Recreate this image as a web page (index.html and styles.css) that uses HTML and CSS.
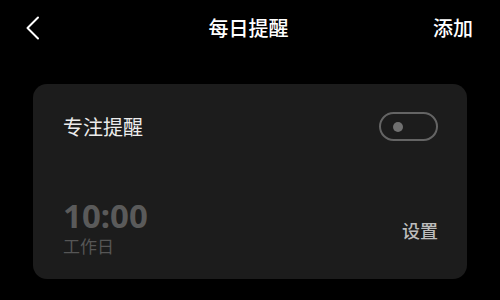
FILE: index.html
```html
<!DOCTYPE html>
<html lang="zh">
<head>
<meta charset="utf-8">
<link rel="stylesheet" href="styles.css">
</head>
<body>
<header class="topbar">
  <span class="back">
    <svg width="18" height="26" viewBox="0 0 18 26"><path d="M14 2.5 L3.5 13 L14 23.5" fill="none" stroke="#fff" stroke-width="2" stroke-linecap="round" stroke-linejoin="round"/></svg>
  </span>
  <h1 class="title">每日提醒</h1>
  <span class="add">添加</span>
</header>
<main class="card">
  <div class="row-top">
    <span class="label">专注提醒</span>
    <span class="toggle"><span class="dot"></span></span>
  </div>
  <div class="row-bottom">
    <div class="time-block">
      <div class="time">10:00</div>
      <div class="days">工作日</div>
    </div>
    <span class="set">设置</span>
  </div>
</main>
</body>
</html>
```
FILE: styles.css
```css
html, body {
  margin: 0;
  padding: 0;
  background: #000;
  width: 500px;
  height: 300px;
  overflow: hidden;
  font-family: "Noto Sans CJK SC", "Noto Sans", sans-serif;
}
.topbar {
  height: 56px;
  display: grid;
  grid-template-columns: 1fr auto 1fr;
  align-items: center;
  padding: 0 27px 0 24px;
}
.back {
  display: flex;
  align-items: center;
}
.title {
  margin: 0;
  font-size: 20px;
  font-weight: 500;
  color: #fff;
  line-height: 1;
}
.add {
  justify-self: end;
  font-size: 20px;
  font-weight: 500;
  color: #fff;
  line-height: 1;
}
.card {
  margin: 28px 33px 0;
  height: 195px;
  box-sizing: border-box;
  background: #1c1c1c;
  border-radius: 14px;
  padding: 28px 29px 21px 30px;
  display: flex;
  flex-direction: column;
  justify-content: space-between;
}
.row-top {
  display: flex;
  justify-content: space-between;
  align-items: center;
}
.label {
  font-size: 20px;
  color: #ececec;
  line-height: 1;
}
.toggle {
  width: 59px;
  height: 29px;
  box-sizing: border-box;
  border: 2px solid #646464;
  border-radius: 15px;
  display: flex;
  align-items: center;
  padding-left: 12px;
}
.dot {
  width: 10px;
  height: 10px;
  border-radius: 50%;
  background: #707070;
}
.row-bottom {
  display: flex;
  justify-content: space-between;
  align-items: center;
}
.time {
  font-family: "Noto Sans", sans-serif;
  font-size: 33px;
  font-weight: 700;
  color: #5a5a5a;
  line-height: 32px;
}
.days {
  font-family: "Liberation Sans", "Noto Sans CJK SC", sans-serif;
  font-size: 17px;
  color: #565656;
  line-height: 20px;
  margin-top: 6px;
}
.set {
  font-size: 18px;
  font-weight: 500;
  color: #bdbdbd;
  margin-top: 2px;
}
```
